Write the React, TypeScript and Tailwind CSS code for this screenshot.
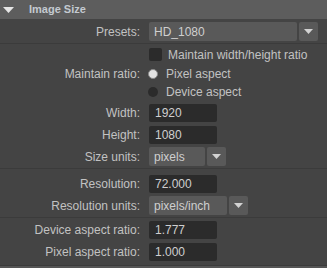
import React from "react";

function Label({ text }: { text: string }) {
  return <div className="w-[141px] shrink-0 pr-[1px] text-right">{text}</div>;
}

function Field({ value }: { value: string }) {
  return (
    <div className="ml-[8px] flex h-full w-[68px] items-center rounded-[2px] bg-[#2b2b2b] pl-[6px] text-[#cfcfcf]">
      {value}
    </div>
  );
}

function Arrow() {
  return (
    <svg width="9" height="5" viewBox="0 0 9 5" className="block">
      <path d="M0 0 H9 L4.5 5 Z" fill="#d2d2d2" />
    </svg>
  );
}

function Dropdown({ value, w }: { value: string; w: number }) {
  return (
    <div className="ml-[8px] flex h-full gap-[2px]">
      <div
        className="flex h-full items-center rounded-[2px] bg-[#595959] pl-[5px] text-[#cfcfcf]"
        style={{ width: w }}
      >
        {value}
      </div>
      <div className="flex h-full w-[19px] items-center justify-center rounded-[2px] bg-[#595959]">
        <Arrow />
      </div>
    </div>
  );
}

export default function App() {
  return (
    <div
      className="h-[268px] w-[327px] overflow-hidden bg-[#444444] text-[12px] leading-none text-[#c2c2c2]"
      style={{ fontFamily: '"Liberation Sans", Arial, sans-serif' }}
    >
      {/* Header */}
      <div className="flex h-[19px] items-center bg-[#5d5d5d]">
        <svg width="11" height="6" viewBox="0 0 11 6" className="ml-[3px] block">
          <path d="M0 0 H11 L5.5 6 Z" fill="#e6e6e6" />
        </svg>
        <span className="ml-[15px] text-[11px] font-bold text-[#c4cad0]">Image Size</span>
      </div>

      {/* Presets */}
      <div className="flex h-[25px] border-b border-[#3b3b3b] pt-[3px]">
        <div className="flex h-[19px] w-full items-center">
          <Label text="Presets:" />
          <div className="ml-[8px] flex h-full gap-[2px]">
            <div className="flex h-full w-[148px] items-center rounded-[2px] bg-[#595959] pl-[5px] text-[#cfcfcf]">
              HD_1080
            </div>
            <div className="flex h-full w-[19px] items-center justify-center rounded-[2px] bg-[#595959]">
              <Arrow />
            </div>
          </div>
        </div>
      </div>

      {/* Ratio + size */}
      <div className="flex h-[125px] flex-col border-b border-[#3b3b3b]">
        <div className="mt-[4px] flex h-[13px] items-center">
          <div className="w-[141px] shrink-0" />
          <div className="ml-[8px] h-[13px] w-[13px] rounded-[2px] bg-[#2b2b2b]" />
          <span className="ml-[6px]">Maintain width/height ratio</span>
        </div>
        <div className="mt-[7px] flex h-[12px] items-center">
          <Label text="Maintain ratio:" />
          <div className="ml-[7px] h-[10px] w-[10px] rounded-full border border-[#8a8a8a] bg-[#e2e2e2]" />
          <span className="ml-[8px]">Pixel aspect</span>
        </div>
        <div className="mt-[6px] flex h-[12px] items-center">
          <div className="w-[141px] shrink-0" />
          <div className="ml-[7px] h-[10px] w-[10px] rounded-full bg-[#2b2b2b]" />
          <span className="ml-[8px]">Device aspect</span>
        </div>
        <div className="mt-[6px] flex h-[18px] items-center">
          <Label text="Width:" />
          <Field value="1920" />
        </div>
        <div className="mt-[4px] flex h-[18px] items-center">
          <Label text="Height:" />
          <Field value="1080" />
        </div>
        <div className="mt-[3px] flex h-[19px] items-center">
          <Label text="Size units:" />
          <Dropdown value="pixels" w={56} />
        </div>
      </div>

      {/* Resolution */}
      <div className="flex h-[49px] flex-col border-b border-[#3b3b3b]">
        <div className="mt-[6px] flex h-[18px] items-center">
          <Label text="Resolution:" />
          <Field value="72.000" />
        </div>
        <div className="mt-[3px] flex h-[19px] items-center">
          <Label text="Resolution units:" />
          <Dropdown value="pixels/inch" w={78} />
        </div>
      </div>

      {/* Aspect ratios */}
      <div className="flex h-[48px] flex-col border-b border-[#3b3b3b]">
        <div className="mt-[3px] flex h-[18px] items-center">
          <Label text="Device aspect ratio:" />
          <Field value="1.777" />
        </div>
        <div className="mt-[4px] flex h-[18px] items-center">
          <Label text="Pixel aspect ratio:" />
          <Field value="1.000" />
        </div>
      </div>

      <div className="h-[10px] bg-[#555555]" />
    </div>
  );
}
